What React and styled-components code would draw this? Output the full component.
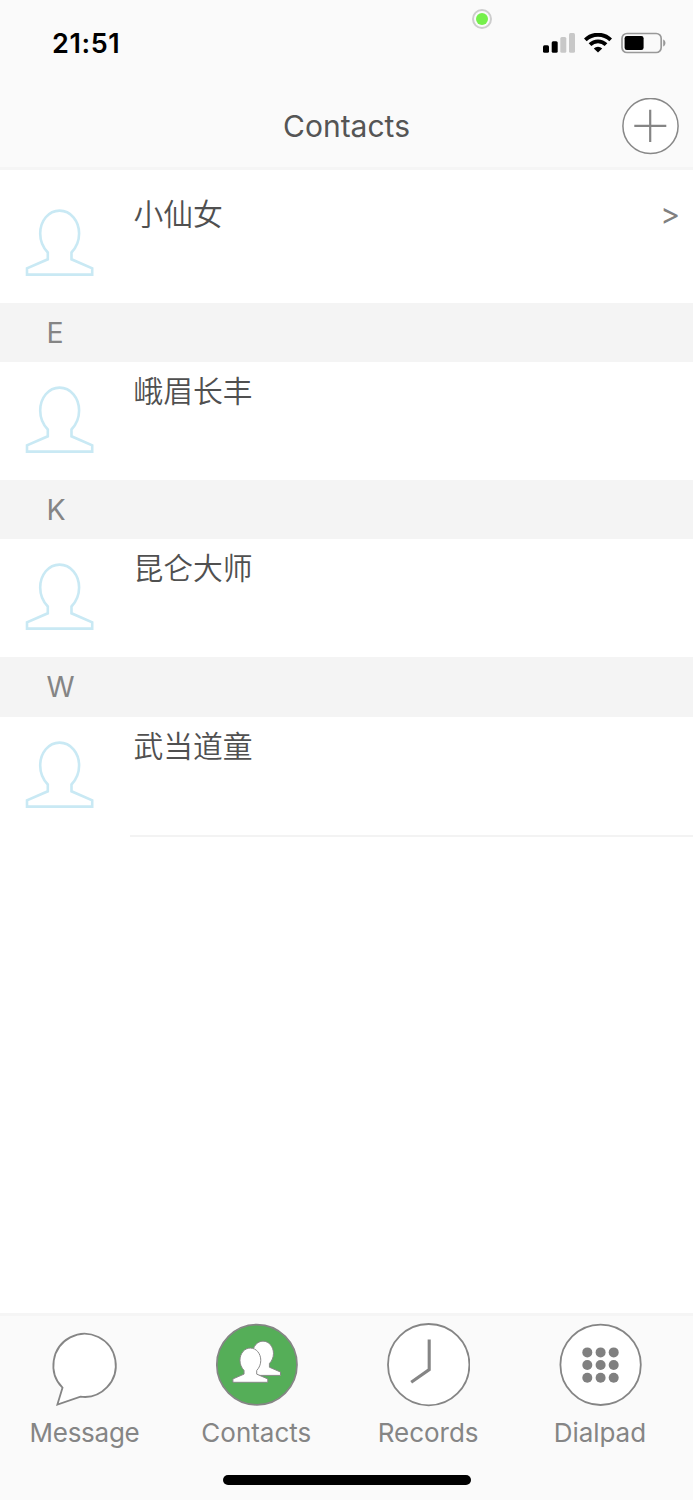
import React, { useState } from 'react';
import styled, { createGlobalStyle } from 'styled-components';

const GlobalStyle = createGlobalStyle`
  * {
    box-sizing: border-box;
  }

  body {
    margin: 0;
    background-color: #fff;
    font-family: Inter, 'Noto Sans CJK SC', sans-serif;
  }
`;

const Screen = styled.div`
  display: flex;
  flex-direction: column;
  width: 693px;
  height: 1500px;
  overflow: hidden;
  background-color: #fff;
`;

const Header = styled.header`
  position: relative;
  height: 170px;
  flex: none;
  background-color: #fafafa;
  border-bottom: 3px solid #f5f5f5;
`;

const StatusBar = styled.div`
  display: flex;
  align-items: center;
  justify-content: space-between;
  height: 84px;
  padding: 2px 27px 0 52px;
`;

const Time = styled.span`
  padding-top: 2px;
  color: #000;
  font-size: 27px;
  font-weight: 600;
  line-height: 32px;
  letter-spacing: 0.6px;
`;

const StatusIcons = styled.div`
  display: flex;
  align-items: center;
  gap: 9px;

  svg {
    display: block;
  }
`;

const RecordingDot = styled.div`
  position: absolute;
  top: 9px;
  left: 472px;
  width: 20px;
  height: 20px;
  border: 2px solid #cdcdcd;
  border-radius: 50%;
  padding: 2px;

  &::before {
    content: '';
    display: block;
    width: 12px;
    height: 12px;
    border-radius: 50%;
    background-color: #75f04b;
  }
`;

const NavBar = styled.div`
  display: grid;
  grid-template-columns: 1fr auto 1fr;
  align-items: center;
  height: 84px;
  padding: 0 14px;
`;

const Title = styled.h1`
  grid-column: 2;
  margin: 0;
  color: #555;
  font-size: 30px;
  font-weight: 400;
  line-height: 36px;
`;

const AddButton = styled.button`
  justify-self: end;
  width: 57px;
  height: 57px;
  padding: 0;
  border: none;
  background: none;

  svg {
    display: block;
  }
`;

const List = styled.main`
  flex: 1;
  padding-top: 15px;
`;

const SectionHeader = styled.div`
  height: 59.1px;
  padding-left: 46.5px;
  background-color: #f4f4f4;
  color: #858585;
  font-size: 28.5px;
  font-weight: 400;
  line-height: 60px;
`;

const Row = styled.div`
  display: flex;
  height: 118.1px;
`;

const Avatar = styled.div`
  flex: none;
  width: 130px;
  padding: 24px 0 0 24px;

  svg {
    display: block;
  }
`;

const RowBody = styled.div`
  display: flex;
  flex: 1;
  justify-content: space-between;
  height: ${(props) => (props.$last ? '120px' : '100%')};
  padding: 5px 13px 0 3.4px;
  border-bottom: ${(props) => (props.$last ? '2px solid #f3f3f3' : 'none')};
`;

const Name = styled.span`
  color: #505050;
  font-family: 'Noto Sans CJK SC', sans-serif;
  font-size: 29.8px;
  font-weight: 350;
  line-height: 44px;
`;

const Arrow = styled.span`
  color: #808080;
  font-size: 30px;
  font-weight: 400;
  line-height: 49px;
`;

const Footer = styled.footer`
  flex: none;
  height: 187px;
  border-top: 3px solid #f5f5f5;
  background-color: #fafafa;
`;

const Tabs = styled.nav`
  display: grid;
  grid-template-columns: repeat(4, 171.8px);
  margin-left: -1.4px;
`;

const Tab = styled.button`
  display: flex;
  flex-direction: column;
  align-items: center;
  padding: 7px 0 0;
  border: none;
  background: none;
  color: #858585;
  font-family: inherit;
  cursor: pointer;
`;

const TabLabel = styled.span`
  margin-top: 9px;
  font-size: 26px;
  line-height: 34px;
  letter-spacing: ${(props) => props.$spacing}px;
`;

const HomeIndicator = styled.div`
  width: 248px;
  height: 10px;
  margin: 25px auto 0;
  border-radius: 5px;
  background-color: #000;
`;

const PERSON =
  'M23.8 43.5C19 38.5 16.2 32 16.2 24.5C16.2 11.8 24.6 1.6 35.6 1.6S55.1 11.8 55.1 24.5C55.1 32 52.2 38.5 47.5 43.5V50.3L68.2 59.3V65.6H3V59.3L23.8 50.3Z';

const PersonIcon = () => (
  <svg width="72" height="70" viewBox="0 0 72 70">
    <path d={PERSON} fill="none" stroke="#c9e9f4" strokeWidth="2.6" />
  </svg>
);

const SignalIcon = () => (
  <svg width="32" height="20" viewBox="0 0 32 20">
    <rect x="0" y="12.3" width="6" height="7.4" rx="1.5" />
    <rect x="8.7" y="8.3" width="6" height="11.4" rx="1.5" />
    <rect x="17.3" y="4" width="6" height="15.7" rx="1.5" fill="#c8c8c8" />
    <rect x="26" y="0" width="6" height="19.7" rx="1.5" fill="#c8c8c8" />
  </svg>
);

const WifiIcon = () => (
  <svg width="28" height="20" viewBox="0 0 28 20">
    <g fill="none" stroke="#000" strokeWidth="3.9">
      <path d="M1.3 6.9A18.1 18.1 0 0 1 26.7 6.9" />
      <path d="M6 11.6A11.5 11.5 0 0 1 22 11.6" />
    </g>
    <path d="M14 19.6L9.8 15.4A6.1 6.1 0 0 1 18.2 15.4Z" />
  </svg>
);

const BatteryIcon = () => (
  <svg width="45" height="21" viewBox="0 0.5 45 21" overflow="visible">
    <rect x="1" y="1" width="39.2" height="19" rx="5" fill="none" stroke="#999" strokeWidth="1.7" />
    <rect x="3.6" y="3.5" width="19" height="14" rx="2.3" />
    <path d="M42.2 7C45.2 8.2 45.2 12.8 42.2 14Z" fill="#999" />
  </svg>
);

const PlusIcon = () => (
  <svg width="57" height="57" viewBox="0 0 57 57">
    <circle cx="28.5" cy="28" r="27.6" fill="#fff" stroke="#888" strokeWidth="1.5" />
    <path d="M12.3 27.8H44.3M28.2 11.7V44.1" stroke="#858585" strokeWidth="2.2" />
  </svg>
);

const MessageIcon = () => (
  <svg width="84" height="84" viewBox="0 0 84 84">
    <path
      d="M14.9 81.2L20 64.3A31.2 31.6 0 1 1 38 73.3Z"
      transform="translate(-.5 .4)"
      fill="#fff"
      stroke="#858585"
      strokeWidth="1.8"
    />
  </svg>
);

const ContactsIcon = () => (
  <svg width="84" height="84" viewBox="0 0 84 84">
    <circle cx="42.9" cy="41.7" r="40.1" fill="#55ae58" stroke="#858585" strokeWidth="1.7" />
    <g fill="#fff" stroke="#858585" strokeWidth="1.8">
      <path d={PERSON} transform="translate(30 17.3) scale(.535)" />
      <path d={PERSON} transform="translate(17.3 24.2) scale(.535)" />
    </g>
  </svg>
);

const RecordsIcon = () => (
  <svg width="84" height="84" viewBox="0 0 84 84">
    <circle cx="42.7" cy="41.7" r="40.7" fill="#fff" stroke="#858585" strokeWidth="1.8" />
    <path d="M43.2 16.4V46.6L25.2 59.2" fill="none" stroke="#858585" strokeWidth="3.1" />
  </svg>
);

const DialpadIcon = () => (
  <svg width="84" height="84" viewBox="0 0 84 84">
    <circle cx="42.6" cy="41.8" r="40.2" fill="#fff" stroke="#858585" strokeWidth="1.8" />
    {[29.4, 42, 54.7].map((y) =>
      [29.3, 42.6, 55.7].map((x) => <circle key={`${x}-${y}`} cx={x} cy={y} r="5" fill="#808080" />)
    )}
  </svg>
);

const sections = [
  { name: '小仙女' },
  { letter: 'E', name: '峨眉长丰' },
  { letter: 'K', name: '昆仑大师' },
  { letter: 'W', name: '武当道童' },
];

const tabs = [
  { label: 'Message', icon: MessageIcon, spacing: -0.25 },
  { label: 'Contacts', icon: ContactsIcon, spacing: 0 },
  { label: 'Records', icon: RecordsIcon, spacing: 0 },
  { label: 'Dialpad', icon: DialpadIcon, spacing: -0.05 },
];

const App = () => {
  const [, setActiveTab] = useState('Contacts');

  return (
    <Screen>
      <GlobalStyle />
      <Header>
        <RecordingDot />
        <StatusBar>
          <Time>21:51</Time>
          <StatusIcons>
            <SignalIcon />
            <WifiIcon />
            <BatteryIcon />
          </StatusIcons>
        </StatusBar>
        <NavBar>
          <Title>Contacts</Title>
          <AddButton>
            <PlusIcon />
          </AddButton>
        </NavBar>
      </Header>
      <List>
        {sections.map((section, index) => (
          <React.Fragment key={section.name}>
            {section.letter && <SectionHeader>{section.letter}</SectionHeader>}
            <Row>
              <Avatar>
                <PersonIcon />
              </Avatar>
              <RowBody $last={index === sections.length - 1}>
                <Name>{section.name}</Name>
                {!section.letter && <Arrow>&gt;</Arrow>}
              </RowBody>
            </Row>
          </React.Fragment>
        ))}
      </List>
      <Footer>
        <Tabs>
          {tabs.map(({ label, icon: Icon, spacing }) => (
            <Tab key={label} onClick={() => setActiveTab(label)}>
              <Icon />
              <TabLabel $spacing={spacing}>{label}</TabLabel>
            </Tab>
          ))}
        </Tabs>
        <HomeIndicator />
      </Footer>
    </Screen>
  );
};

export default App;
